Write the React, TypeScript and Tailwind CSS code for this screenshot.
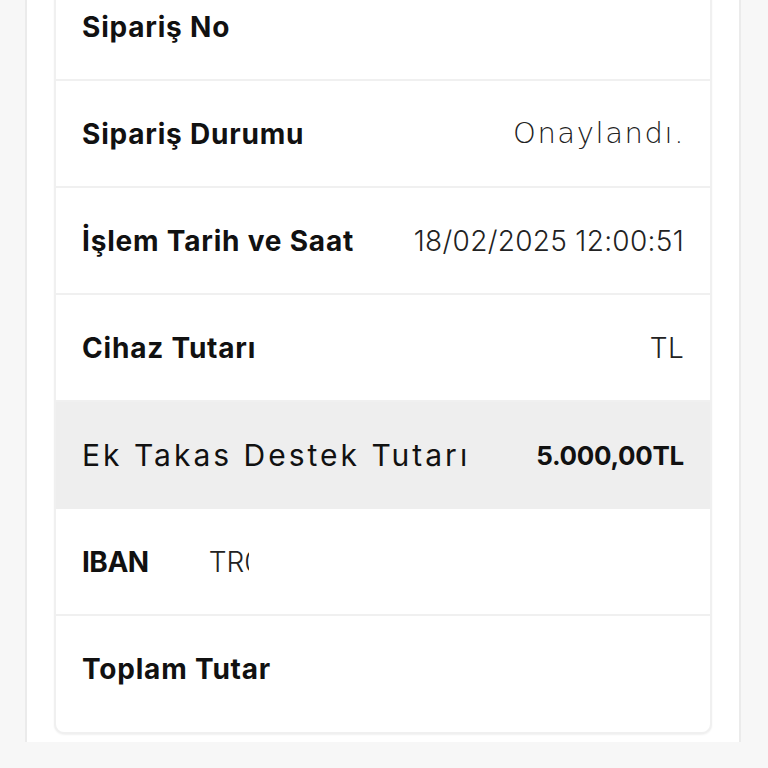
import React from "react";

const labelCls = "text-[28px] font-bold text-[#111] tracking-[0.8px]";
const valueCls = "text-[28px] font-light text-[#222] tracking-[0.3px]";

function Row({ label, value, last }: { label: React.ReactNode; value?: React.ReactNode; last?: boolean }) {
  return (
    <div className={"flex items-center justify-between px-[26px] h-[107px] " + (last ? "" : "border-b-2 border-[#f0f0f0]")}>
      {label}
      {value}
    </div>
  );
}

export default function App() {
  return (
    <div className="w-[768px] h-[768px] overflow-hidden bg-[#f7f7f7]" style={{ fontFamily: "Inter, 'Noto Sans', sans-serif" }}>
      <div className="ml-[25px] w-[716px] h-[768px] bg-white border-x-2 border-[#ebebeb] px-[27px]">
        <div className="-mt-[26px] bg-white border-2 border-t-0 border-[#f0f0f0] rounded-b-[10px] shadow-[0_1px_2px_rgba(0,0,0,0.06)] overflow-hidden">
          <div className="flex items-center px-[26px] h-[107px] pt-[1px] border-b-2 border-[#f0f0f0]">
            <span className={labelCls}>Sipariş No</span>
          </div>
          <Row
            label={<span className={labelCls}>Sipariş Durumu</span>}
            value={<span className="text-[29px] font-extralight text-[#222] tracking-[1.6px] -mr-[1px] font-['DejaVu_Sans',sans-serif]">Onaylandı.</span>}
          />
          <Row label={<span className={labelCls}>İşlem Tarih ve Saat</span>} value={<span className={valueCls}>18/02/2025 12:00:51</span>} />
          <Row label={<span className={labelCls}>Cihaz Tutarı</span>} value={<span className={valueCls}>TL</span>} />
          <div className="flex items-center justify-between px-[26px] h-[107px] bg-[#eeeeee]">
            <span className="text-[30px] font-normal text-[#111] tracking-[3px]">Ek Takas Destek Tutarı</span>
            <span className="text-[26px] font-bold text-[#111] tracking-[-0.3px]">5.000,00TL</span>
          </div>
          <div className="flex items-center px-[26px] h-[107px] border-b-2 border-[#f0f0f0]">
            <span className="text-[28px] font-bold text-[#111] tracking-[-0.5px]">IBAN</span>
            <span className="ml-[60px] w-[40px] overflow-hidden whitespace-nowrap text-[28px] font-light text-[#222] leading-[36px]">TR0</span>
          </div>
          <div className="flex items-start px-[26px] h-[116px] pt-[32px]">
            <span className={labelCls}>Toplam Tutar</span>
          </div>
        </div>
      </div>
    </div>
  );
}
